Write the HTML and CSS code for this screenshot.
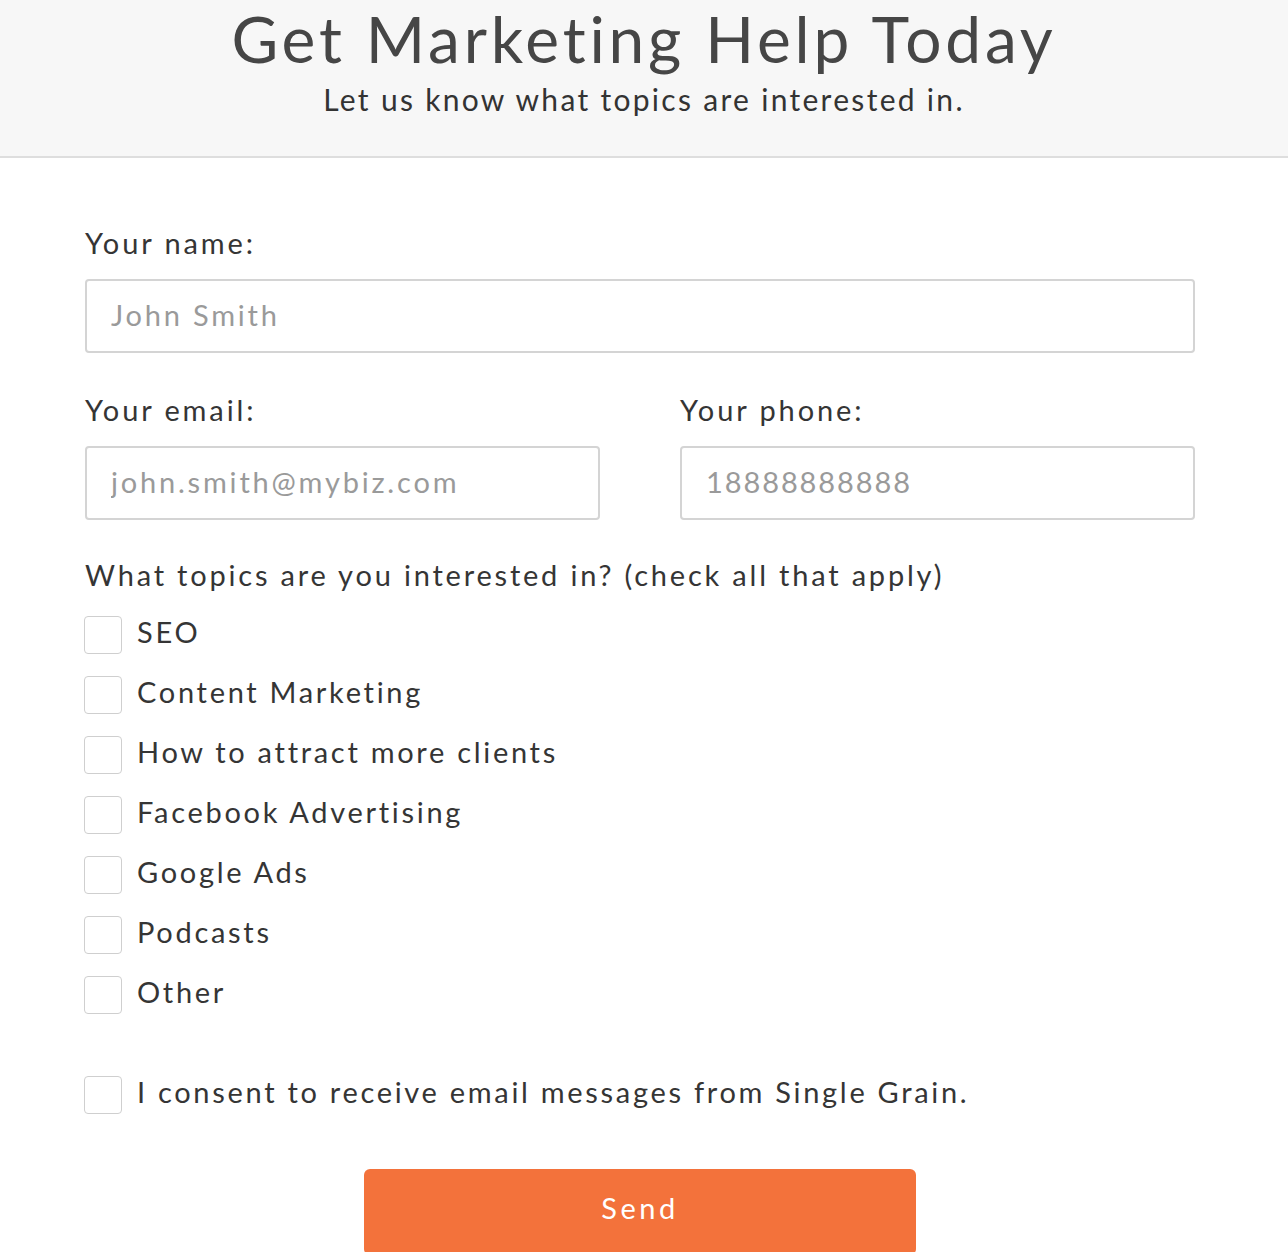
FILE: index.html
```html
<!DOCTYPE html>
<html lang="en">
<head>
<meta charset="utf-8">
<title>Get Marketing Help Today</title>
<link rel="stylesheet" href="styles.css">
</head>
<body>
<header class="hero">
  <h1 class="hero-title">Get Marketing Help Today</h1>
  <p class="hero-sub">Let us know what topics are interested in.</p>
</header>
<form class="form">
  <div class="field">
    <label class="label" for="name">Your name:</label>
    <input class="input" id="name" type="text" placeholder="John Smith">
  </div>
  <div class="row">
    <div class="field">
      <label class="label" for="email">Your email:</label>
      <input class="input" id="email" type="text" placeholder="john.smith@mybiz.com">
    </div>
    <div class="field">
      <label class="label" for="phone">Your phone:</label>
      <input class="input input-phone" id="phone" type="text" placeholder="18888888888">
    </div>
  </div>
  <p class="question">What topics are you interested in? (check all that apply)</p>
  <ul class="checks">
    <li class="check"><span class="box"></span><span class="check-text">SEO</span></li>
    <li class="check"><span class="box"></span><span class="check-text">Content Marketing</span></li>
    <li class="check"><span class="box"></span><span class="check-text">How to attract more clients</span></li>
    <li class="check"><span class="box"></span><span class="check-text">Facebook Advertising</span></li>
    <li class="check"><span class="box"></span><span class="check-text">Google Ads</span></li>
    <li class="check"><span class="box"></span><span class="check-text">Podcasts</span></li>
    <li class="check"><span class="box"></span><span class="check-text">Other</span></li>
  </ul>
  <div class="check consent"><span class="box"></span><span class="check-text">I consent to receive email messages from Single Grain.</span></div>
  <div class="actions"><button type="button" class="send">Send</button></div>
</form>
</body>
</html>
```
FILE: styles.css
```css
* { box-sizing: border-box; }
html, body { margin: 0; padding: 0; background: #fff; }
body {
  font-family: "Lato", "Open Sans", sans-serif;
  color: #353535;
  width: 1288px;
  height: 1252px;
  overflow: hidden;
}
.hero {
  height: 158px;
  background: #f7f7f7;
  border-bottom: 2px solid #dedede;
  text-align: center;
  padding-top: 1px;
}
.hero-title {
  margin: 0;
  font-weight: 400;
  font-size: 64px;
  line-height: 76px;
  color: #464646;
  letter-spacing: 3.8px;
}
.hero-sub {
  margin: 2px 0 0;
  font-size: 30px;
  line-height: 40px;
  color: #333;
  letter-spacing: 2.3px;
}
.form {
  padding: 65px 0 0 85px;
  width: 1195px;
}
.field { display: flex; flex-direction: column; }
.label {
  font-size: 29px;
  line-height: 40px;
  margin-bottom: 16px;
  color: #353535;
  letter-spacing: 2.9px;
}
.input {
  height: 74px;
  border: 2px solid #d4d4d4;
  border-radius: 4px;
  padding: 0 24px 4px;
  font-family: inherit;
  font-size: 29px;
  color: #333;
  outline: none;
  letter-spacing: 2.8px;
}
.input-phone { letter-spacing: 1.9px; }
.input::placeholder { color: #9a9a9a; }
.row {
  display: grid;
  grid-template-columns: 515px 515px;
  column-gap: 80px;
  margin-top: 37px;
}
.question {
  margin: 35px 0 10px;
  font-size: 29px;
  line-height: 40px;
  letter-spacing: 2.8px;
}
.checks { list-style: none; margin: 0; padding: 0; }
.check {
  display: flex;
  align-items: center;
  gap: 15px;
  height: 60px;
  font-size: 29px;
  letter-spacing: 2.7px;
  margin-left: -1px;
}
.check-text { padding-bottom: 8px; }
.box {
  width: 38px;
  height: 38px;
  border: 1px solid #cfcfcf;
  border-radius: 4px;
  flex: none;
  background: #fff;
}
.consent { margin-top: 40px; }
.actions {
  display: flex;
  justify-content: center;
  margin-top: 44px;
}
.send {
  width: 552px;
  height: 86px;
  border: none;
  border-radius: 6px;
  background: #f3723b;
  color: #fff;
  font-family: inherit;
  font-size: 29px;
  letter-spacing: 3.5px;
  padding: 0 0 10px;
}
```
